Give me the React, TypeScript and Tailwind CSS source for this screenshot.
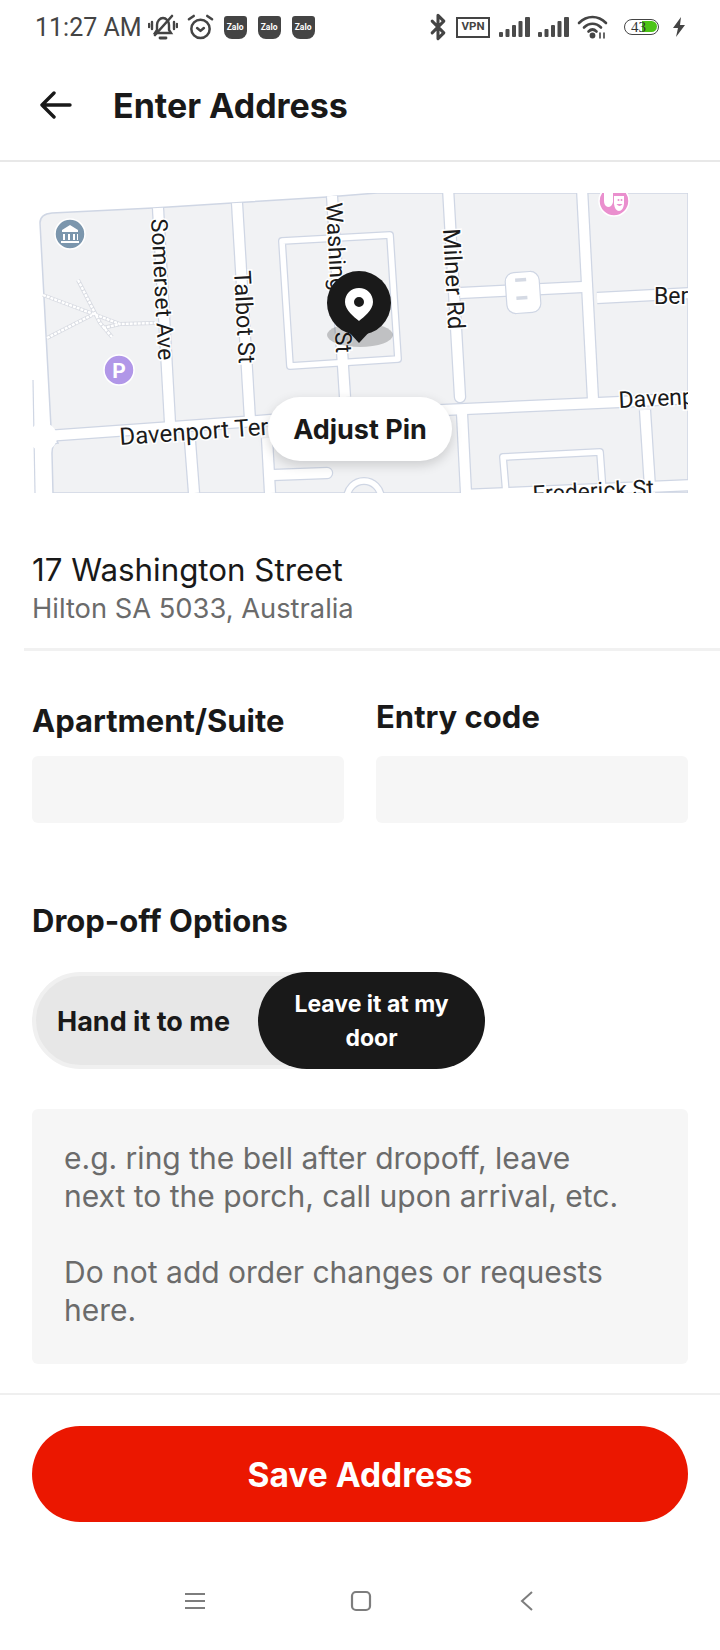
import React from "react";
import { Bluetooth } from "lucide-react";

const ROADS = [
  "M126 15L138 230",
  "M158 248L162 300",
  "M205 10L218 227",
  "M235 245L238 300",
  "M300 3L313 204",
  "M0 244L238 227L411 217L588 209L660 205",
  "M428 100L551 94",
  "M565 105L660 100",
  "M550 -5L561 207",
  "M430 220L434 300",
  "M613 217L618 295",
  "M430 302L660 292",
];
const ROUND_ROADS = ["M416 -5L428 204", "M241 282L295 280"];
const THIN_ROADS = ["M250 48L358 42L366 166L258 173Z", "M474 300L471 264L568 259L571 300"];

function MapDrawing() {
  return (
    <svg viewBox="0 0 656 300" className="block h-[300px] w-[656px]" style={{ fontFamily: "Roboto, sans-serif" }}>
      <defs>
        <clipPath id="mapclip"><rect width="656" height="300" /></clipPath>
      </defs>
      <g clipPath="url(#mapclip)">
        <path d="M8 30Q8 21 20 20L121 15L200 10L295 4L345 0H656V300H21L20 260Q20 250 26 250L19 234Z" fill="#f1f2f4" stroke="#cfd6e4" strokeWidth="1.5" />
        <path d="M1 187L3 300" stroke="#cfd6e4" strokeWidth="1.2" fill="none" />
        <g fill="none" strokeLinejoin="round">
          {ROADS.map((d) => <path key={d} d={d} stroke="#cfd6e4" strokeWidth="12.5" />)}
          {ROUND_ROADS.map((d) => <path key={d} d={d} stroke="#cfd6e4" strokeWidth="12.5" strokeLinecap="round" />)}
          {THIN_ROADS.map((d) => <path key={d} d={d} stroke="#cfd6e4" strokeWidth="8" />)}
          <circle cx="332" cy="305" r="17" stroke="#cfd6e4" strokeWidth="8" />
          {THIN_ROADS.map((d) => <path key={d + "w"} d={d} stroke="#ffffff" strokeWidth="5.5" />)}
          {ROADS.map((d) => <path key={d + "w"} d={d} stroke="#ffffff" strokeWidth="10" />)}
          {ROUND_ROADS.map((d) => <path key={d + "w"} d={d} stroke="#ffffff" strokeWidth="10" strokeLinecap="round" />)}
          <circle cx="332" cy="305" r="17" stroke="#ffffff" strokeWidth="5.5" />
          <circle cx="11" cy="244" r="14" fill="#ffffff" stroke="none" />
        </g>
        <rect x="474" y="79" width="34" height="41" rx="9" fill="#ffffff" stroke="#cfd6e4" strokeWidth="1.2" transform="rotate(-4 491 99)" />
        <rect x="484" y="85" width="11" height="3.5" fill="#d5dae4" transform="rotate(-4 491 99)" />
        <rect x="484" y="103" width="11" height="3.5" fill="#d5dae4" transform="rotate(-4 491 99)" />
        <g fill="none">
          <path d="M11 102L88 131L123 130M15 145L60 122M46 87L68 130L80 144M71 135L88 131" stroke="#d8dbe2" strokeWidth="4" />
          <path d="M11 102L88 131L123 130M15 145L60 122M46 87L68 130L80 144M71 135L88 131" stroke="#ffffff" strokeWidth="2.4" strokeDasharray="3 1" />
        </g>

        <circle cx="38" cy="41" r="15" fill="#7b96ad" stroke="#ffffff" strokeWidth="1.5" />
        <path d="M38 32L46 37V39H30V37Z M31 41H33V47H31ZM36 41H38V47H36ZM41 41H43V47H41ZM45 41H46V47H45Z M29 48H47V50H29Z" fill="#ffffff" />
        <circle cx="87" cy="177" r="15" fill="#b197e8" stroke="#ffffff" strokeWidth="1.5" />
        <text x="87" y="185" textAnchor="middle" fontSize="21" fontWeight="700" fill="#ffffff">P</text>
        <circle cx="582" cy="8" r="15" fill="#ea8fce" stroke="#ffffff" strokeWidth="1.5" />
        <path d="M572 0H581V9Q580 14 576 14Q572 13 572 8Z M582 3H592V11Q591 18 587 18Q583 18 582 11Z" fill="#ffffff" />
        <circle cx="586.5" cy="7" r="1" fill="#ea8fce" />
        <circle cx="589.5" cy="7" r="1" fill="#ea8fce" />
        <path d="M584.5 11Q587.5 15 590.5 11Z" fill="#ea8fce" />

        <g fill="#1b1b1b" stroke="#ffffff" strokeWidth="3" style={{ paintOrder: "stroke" }}>
          <text transform="translate(119 26) rotate(87)" fontSize="23">Somerset Ave</text>
          <text transform="translate(202 78) rotate(87)" fontSize="23.5">Talbot St</text>
          <text transform="translate(294 10) rotate(87)" fontSize="23">Washing</text>
          <text transform="translate(303 139) rotate(87)" fontSize="23">St</text>
          <text transform="translate(411 36) rotate(87)" fontSize="24">Milner Rd</text>
          <text transform="translate(88 252) rotate(-4)" fontSize="24">Davenport Ter</text>
          <text transform="translate(587 215) rotate(-3)" fontSize="23">Davenport</text>
          <text x="622" y="111" fontSize="23">Ber</text>
          <text transform="translate(501 309) rotate(-3)" fontSize="23">Frederick St</text>
        </g>
      </g>
    </svg>
  );
}

function Pin() {
  return (
    <svg viewBox="0 0 70 96" className="absolute left-[292px] top-[76px] h-[96px] w-[70px]">
      <ellipse cx="36" cy="66" rx="33" ry="12" fill="#000000" fillOpacity="0.2" />
      <path d="M35 74L22 60H48Z" fill="#1a1a1a" />
      <circle cx="35" cy="34" r="32" fill="#1a1a1a" />
      <path fillRule="evenodd" d="M35 19C27 19 21 25 21 33C21 41 30 48 35 52C40 48 49 41 49 33C49 25 43 19 35 19ZM35 28A5 5 0 1 1 35 38A5 5 0 1 1 35 28Z" fill="#ffffff" />
    </svg>
  );
}

function Zalo() {
  return (
    <div className="flex h-[23px] w-[23px] items-center justify-center rounded-t-[3px] rounded-b-[8px] bg-[#444444] text-[8.5px] font-bold leading-none text-white" style={{ fontFamily: "Roboto, sans-serif" }}>
      Zalo
    </div>
  );
}

function Signal() {
  return (
    <svg viewBox="0 0 31 20" className="h-[20px] w-[31px]" fill="#4a4a4a">
      <rect x="0" y="15" width="4" height="5" rx="1" />
      <rect x="6.5" y="12" width="4" height="8" rx="1" />
      <rect x="13" y="8" width="4" height="12" rx="1" />
      <rect x="19.5" y="4" width="4" height="16" rx="1" />
      <rect x="26" y="0" width="5" height="20" rx="1" />
    </svg>
  );
}

function StatusBar() {
  return (
    <div className="flex h-[54px] items-center pl-[35px] pr-[34px] text-[#444444]">
      <span className="mr-[6px] text-[25px] leading-none" style={{ fontFamily: "Roboto, sans-serif" }}>11:27 AM</span>
      <svg viewBox="0 0 30 26" className="mr-[9px] h-[26px] w-[30px]" fill="none" stroke="#444444" strokeWidth="2.4" strokeLinecap="round">
        <path d="M9 16V11C9 7 12 4 15 4C18 4 21 7 21 11V16L23 19H7Z" />
        <path d="M12 24H18" strokeWidth="2.8" />
        <path d="M24 2L7 21" strokeWidth="2.6" />
        <path d="M4 8V15M1 10V13M26 8V15M29 10V13" />
      </svg>
      <svg viewBox="0 0 28 26" className="mr-[10px] h-[26px] w-[27px]" fill="none" stroke="#444444" strokeWidth="2.6" strokeLinecap="round" strokeLinejoin="round">
        <circle cx="14" cy="15" r="9.5" />
        <path d="M10.5 14L14 17L17.5 14" />
        <path d="M2 5L7 1.5M26 5L21 1.5" />
      </svg>
      <div className="flex gap-[11px]"><Zalo /><Zalo /><Zalo /></div>
      <div className="ml-auto flex items-center">
        <Bluetooth size={28} strokeWidth={2.6} color="#444444" className="mr-[4px] -ml-[6px]" />
        <div className="mr-[9px] flex h-[21px] w-[34px] items-center justify-center border-[2px] border-[#444444] text-[11.5px] font-bold leading-none" style={{ fontFamily: "Roboto, sans-serif" }}>VPN</div>
        <div className="flex gap-[8px]"><Signal /><Signal /></div>
        <svg viewBox="0 0 31 24" className="ml-[8px] h-[24px] w-[31px]" fill="none" stroke="#444444" strokeWidth="2.6" strokeLinecap="round">
          <path d="M2 8C10 0 21 0 29 8" />
          <path d="M7 12.5C12 7.5 19 7.5 24 12.5" />
          <path d="M11.5 16.5C14 14 17 14 19.5 16.5" />
          <circle cx="15.5" cy="20.5" r="1.6" fill="#444444" />
          <path d="M23 18V23M27 18V23" strokeWidth="1.6" />
        </svg>
        <div className="relative ml-[16px] h-[16px] w-[35px] overflow-hidden rounded-full border-[1.5px] border-[#444444]">
          <div className="absolute right-[1px] top-[1px] h-[11px] w-[15px] rounded-r-full bg-[#4cc417]" />
          <span className="absolute left-[6px] top-[-1px] text-[15px] leading-[16px] text-[#333333]" style={{ fontFamily: "'Liberation Serif', serif" }}>43</span>
        </div>
        <svg viewBox="0 0 14 20" className="ml-[13px] h-[20px] w-[14px]" fill="#444444"><path d="M9 0L1 11H6L4 20L13 8H8Z" /></svg>
      </div>
    </div>
  );
}

function NavBar() {
  return (
    <div className="flex h-[128px] items-start pt-[70px] pl-[185px]">
      <svg viewBox="0 0 20 18" className="h-[18px] w-[20px]" stroke="#7d7d7d" strokeWidth="2"><path d="M0 2H20M0 9H20M0 16H20" /></svg>
      <svg viewBox="0 0 22 22" className="-mt-[2px] ml-[145px] h-[22px] w-[22px]" fill="none" stroke="#7d7d7d" strokeWidth="2.2"><rect x="2" y="2" width="18" height="18" rx="4" /></svg>
      <svg viewBox="0 0 14 22" className="-mt-[2px] ml-[148px] h-[22px] w-[14px]" fill="none" stroke="#7d7d7d" strokeWidth="2"><path d="M12 2L2 11L12 20" /></svg>
    </div>
  );
}

export default function App() {
  return (
    <div className="flex h-[1650px] w-[720px] flex-col overflow-hidden bg-white text-[#191919]" style={{ fontFamily: "Inter, sans-serif" }}>
      <StatusBar />
      <header className="flex h-[108px] items-center border-b-2 border-[#e8e8e8] pb-[3px] pl-[40px]">
        <svg viewBox="0 0 32 28" className="-mt-[1px] h-[28px] w-[32px]" fill="none" stroke="#191919" strokeWidth="3.4" strokeLinecap="round" strokeLinejoin="round">
          <path d="M14 2L2 14L14 26M2 14H30" />
        </svg>
        <h1 className="ml-[41px] text-[34px] font-bold leading-none">Enter Address</h1>
      </header>

      <div className="relative mx-[32px] mt-[31px] h-[300px]">
        <MapDrawing />
        <Pin />
        <div className="absolute left-[236px] top-[204px] flex h-[64px] w-[184px] items-center justify-center rounded-full bg-white pt-[3px] text-[27px] font-bold shadow-[0_4px_12px_rgba(0,0,0,0.16)]">Adjust Pin</div>
      </div>

      <div className="mt-[58px] pl-[32px]">
        <div className="text-[31.3px] leading-[38px]">17 Washington Street</div>
        <div className="mt-[1px] text-[27.3px] leading-[37px] text-[#6b6b6b]">Hilton SA 5033, Australia</div>
      </div>
      <div className="ml-[24px] mt-[21px] h-[3px] bg-[#f1f1f1]" />

      <div className="mt-[51px] flex gap-[32px] px-[32px]">
        <div className="w-[312px]">
          <div className="text-[31px] font-bold leading-[38px]">Apartment/Suite</div>
          <div className="mt-[16px] h-[67px] rounded-[6px] bg-[#f6f6f6]" />
        </div>
        <div className="w-[312px]">
          <div className="-mt-[4px] text-[31px] font-bold leading-[38px]">Entry code</div>
          <div className="mt-[20px] h-[67px] rounded-[6px] bg-[#f6f6f6]" />
        </div>
      </div>

      <div className="mt-[79px] pl-[32px] text-[31px] font-bold leading-[38px]">Drop-off Options</div>

      <div className="ml-[32px] mt-[32px] flex h-[97px] w-[453px] items-stretch rounded-full border-[4px] border-[#f0f0f0] bg-[#e7e7e7]">
        <div className="flex w-[222px] items-center pl-[21px] pt-[3px] text-[27px] font-bold">Hand it to me</div>
        <div className="-my-[4px] -mr-[4px] flex flex-1 items-center justify-center rounded-full bg-[#191919] px-[20px] text-center text-[23px] font-bold leading-[34px] text-white">Leave it at my door</div>
      </div>

      <div className="mx-[32px] mt-[40px] h-[255px] rounded-[6px] bg-[#f6f6f6] pl-[32px] pr-[60px] pt-[30px] text-[30px] leading-[38px] text-[#6b6b6b]">
        <p>e.g. ring the bell after dropoff, leave next to the porch, call upon arrival, etc.</p>
        <p className="mt-[38px]">Do not add order changes or requests here.</p>
      </div>

      <div className="mt-[29px] h-[2px] bg-[#efefef]" />
      <div className="mx-[32px] mt-[31px] flex h-[96px] items-center justify-center rounded-full bg-[#eb1700] pt-[3px] text-[33.5px] font-bold text-white">Save Address</div>
      <NavBar />
    </div>
  );
}
